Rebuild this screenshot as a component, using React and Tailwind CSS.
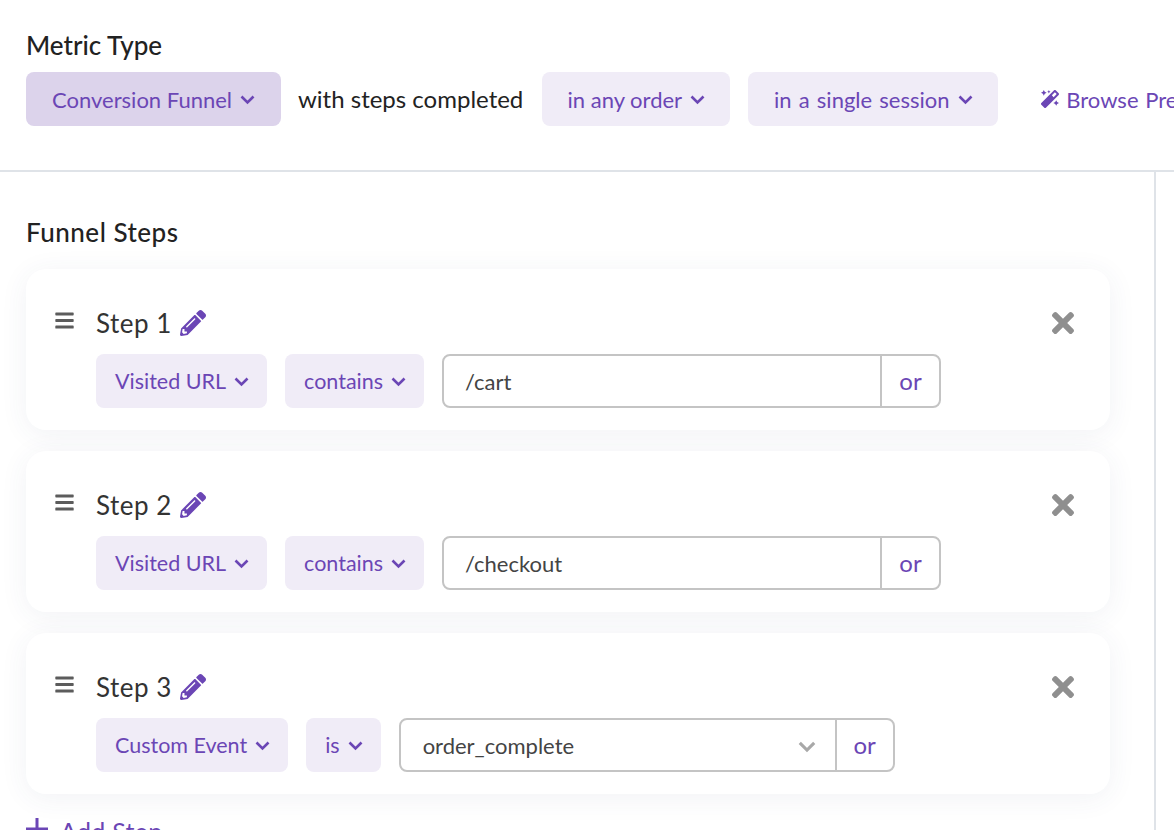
import React from "react";
import { FaBars, FaMagic, FaPencilAlt, FaTimes } from "react-icons/fa";

function Chevron({ className }) {
  return (
    <svg viewBox="0 0 15 10" fill="none" stroke="currentColor" strokeWidth="2.6" className={className}>
      <path d="M1.5 1.5 L7.5 7.5 L13.5 1.5" />
    </svg>
  );
}

function Pill({ label, dark, width }) {
  return (
    <button className={`flex h-[54px] shrink-0 items-center justify-center gap-[8px] rounded-[8px] text-[#6b46b5] ${width} ${dark ? "bg-[#dcd3eb]" : "bg-[#f0ecf7]"}`}>
      <span>{label}</span>
      <Chevron className="mt-[2px] h-[10px] w-[15px]" />
    </button>
  );
}

function SmallPill({ label }) {
  return (
    <button className="flex h-[54px] shrink-0 items-center gap-[8px] rounded-[8px] bg-[#f0ecf7] pl-[19px] pr-[18px] text-[#6b46b5]">
      <span>{label}</span>
      <Chevron className="mt-[2px] h-[10px] w-[15px]" />
    </button>
  );
}

function UrlInput({ value }) {
  return (
    <div className="flex h-[54px] w-[499px] rounded-[8px] border-2 border-[#c4c4c4]">
      <div className="flex flex-1 items-center pl-[21px] text-[22px] text-[#444444]">{value}</div>
      <div className="flex w-[59px] items-center justify-center border-l-2 border-[#c4c4c4] text-[24px] text-[#6b46b5]">or</div>
    </div>
  );
}

function EventSelect({ value }) {
  return (
    <div className="flex h-[54px] w-[496px] rounded-[8px] border-2 border-[#c4c4c4]">
      <div className="flex flex-1 items-center justify-between pl-[22px] pr-[19px] text-[22px] text-[#444444]">
        <span>{value}</span>
        <Chevron className="mt-[3px] h-[12px] w-[18px] text-[#a8a8a8]" />
      </div>
      <div className="flex w-[58px] items-center justify-center border-l-2 border-[#c4c4c4] text-[24px] text-[#6b46b5]">or</div>
    </div>
  );
}

function StepCard({ title, children }) {
  return (
    <div className="h-[161px] w-[1084px] rounded-[20px] bg-white pl-[28px] pr-[31px] pt-[36px] shadow-[0_4px_28px_rgba(60,70,110,0.07)]">
      <div className="flex h-[36px] items-center">
        <FaBars className="mb-[5px] h-[21px] w-[21px] text-[#5c5c5c]" />
        <span className="ml-[21px] text-[26px] tracking-[0.5px] text-[#333333]">{title}</span>
        <FaPencilAlt className="ml-[8px] h-[26px] w-[26px] text-[#6b46b5]" />
        <FaTimes className="ml-auto h-[32px] w-[32px] text-[#8f8f8f]" />
      </div>
      <div className="ml-[42px] mt-[13px] flex gap-[18px] text-[21.5px]">{children}</div>
    </div>
  );
}

export default function App() {
  return (
    <div className="h-[830px] w-[1174px] overflow-hidden bg-white font-['Lato',sans-serif] text-[#222222]">
      <div className="h-[172px] border-b-2 border-[#dfe3e8] pl-[26px] pt-[27px]">
        <div className="text-[26px] font-medium leading-[36px]">Metric Type</div>
        <div className="mt-[9px] flex items-center whitespace-nowrap text-[22px] [word-spacing:1px]">
          <Pill label="Conversion Funnel" dark width="w-[255px]" />
          <span className="ml-[17px] mr-[19px] shrink-0 text-[24px] [word-spacing:0]">with steps completed</span>
          <Pill label="in any order" width="w-[188px]" />
          <div className="w-[18px] shrink-0" />
          <Pill label={<span className="[word-spacing:1.5px]">in a single session</span>} width="w-[250px]" />
          <a href="#" className="ml-[43px] flex shrink-0 items-center gap-[7px] text-[#6b46b5]">
            <FaMagic className="h-[18px] w-[18px]" />
            <span>Browse Presets</span>
          </a>
        </div>
      </div>
      <div className="flex">
        <div className="h-[658px] w-[1156px] border-r-2 border-[#dfe3e8] pl-[26px] pt-[42px]">
          <div className="text-[26px] font-medium leading-[36px] tracking-[0.5px]">Funnel Steps</div>
          <div className="mt-[19px] flex flex-col gap-[21px]">
            <StepCard title="Step 1">
              <SmallPill label="Visited URL" />
              <SmallPill label="contains" />
              <UrlInput value="/cart" />
            </StepCard>
            <StepCard title="Step 2">
              <SmallPill label="Visited URL" />
              <SmallPill label="contains" />
              <UrlInput value="/checkout" />
            </StepCard>
            <StepCard title="Step 3">
              <SmallPill label="Custom Event" />
              <SmallPill label="is" />
              <EventSelect value="order_complete" />
            </StepCard>
          </div>
          <div className="mt-[19px] flex items-center gap-[12px] text-[25px] tracking-[0.3px] text-[#6b46b5]">
            <svg viewBox="0 0 22 22" fill="none" stroke="currentColor" strokeWidth="3" className="mb-[6px] h-[22px] w-[22px]">
              <path d="M11 0 V22 M0 11 H22" />
            </svg>
            <span>Add Step</span>
          </div>
        </div>
      </div>
    </div>
  );
}
